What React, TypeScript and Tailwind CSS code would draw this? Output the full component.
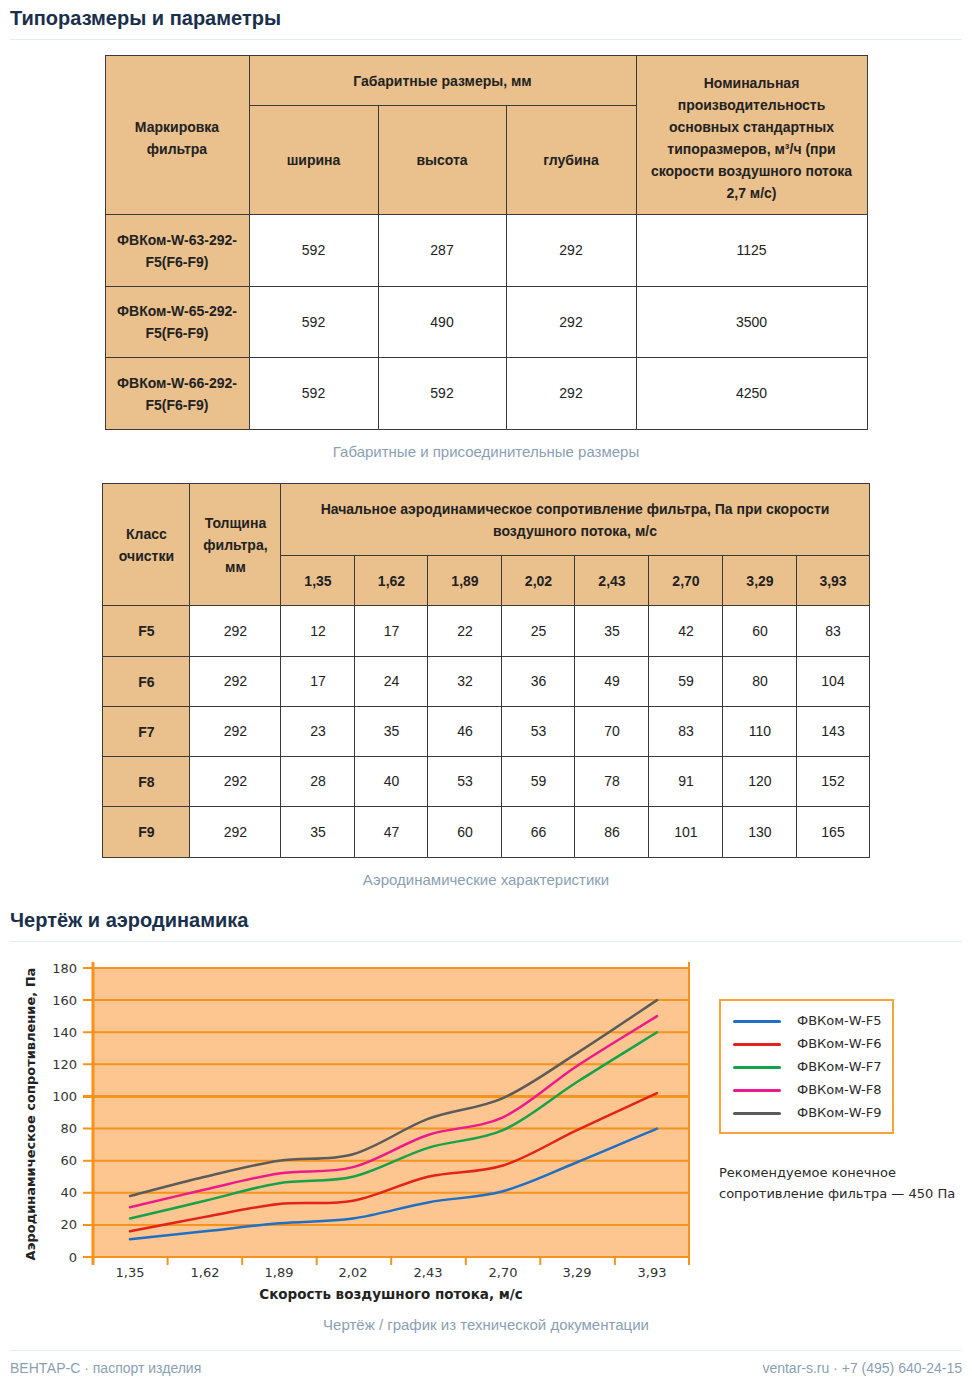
import React from "react"

const sizes = [
  { name: ["ФВКом-W-63-292-", "F5(F6-F9)"], w: 592, h: 287, d: 292, q: 1125, rh: "h-[72px]" },
  { name: ["ФВКом-W-65-292-", "F5(F6-F9)"], w: 592, h: 490, d: 292, q: 3500, rh: "h-[71px]" },
  { name: ["ФВКом-W-66-292-", "F5(F6-F9)"], w: 592, h: 592, d: 292, q: 4250, rh: "h-[72px]" },
]

const speeds = ["1,35", "1,62", "1,89", "2,02", "2,43", "2,70", "3,29", "3,93"]
const speedW = ["w-[74px]", "w-[73px]", "w-[74px]", "w-[73px]", "w-[74px]", "w-[74px]", "w-[74px]", "w-[72px]"]

const aero = [
  { cls: "F5", vals: [12, 17, 22, 25, 35, 42, 60, 83], rh: "h-[51px]" },
  { cls: "F6", vals: [17, 24, 32, 36, 49, 59, 80, 104], rh: "h-[50px]" },
  { cls: "F7", vals: [23, 35, 46, 53, 70, 83, 110, 143], rh: "h-[50px]" },
  { cls: "F8", vals: [28, 40, 53, 59, 78, 91, 120, 152], rh: "h-[50px]" },
  { cls: "F9", vals: [35, 47, 60, 66, 86, 101, 130, 165], rh: "h-[51px]" },
]

// chart geometry, in page pixels
const X0 = 93
const X1 = 689
const Y0 = 1257
const PX = 289 / 180
const yOf = (v: number) => Y0 - v * PX
const xs = [130, 205, 279, 353, 428, 503, 577, 657]
const ticks = [167.6, 242.2, 316.7, 391.2, 465.8, 540.3, 614.9, 689]

const series = [
  { label: "ФВКом-W-F5", color: "#1f6fc4", v: [11, 16, 21, 24, 34, 41, 59, 80] },
  { label: "ФВКом-W-F6", color: "#e2231a", v: [16, 25, 33, 35, 50, 57, 79, 102] },
  { label: "ФВКом-W-F7", color: "#16a24a", v: [24, 35, 46, 50, 68, 79, 109, 140] },
  { label: "ФВКом-W-F8", color: "#ec1b8c", v: [31, 42, 52, 56, 76, 87, 119, 150] },
  { label: "ФВКом-W-F9", color: "#5b5b5b", v: [38, 50, 60, 64, 86, 99, 127, 160] },
]

function smooth(vals: number[]) {
  const p = vals.map((v, i) => [xs[i], yOf(v)])
  let d = `M${p[0][0]},${p[0][1]}`
  for (let i = 0; i < p.length - 1; i++) {
    const a = p[i - 1] || p[i]
    const b = p[i]
    const c = p[i + 1]
    const e = p[i + 2] || c
    const c1 = [b[0] + (c[0] - a[0]) / 6, b[1] + (c[1] - a[1]) / 6]
    const c2 = [c[0] - (e[0] - b[0]) / 6, c[1] - (e[1] - b[1]) / 6]
    d += ` C${c1[0]},${c1[1]} ${c2[0]},${c2[1]} ${c[0]},${c[1]}`
  }
  return d
}

function Chart() {
  const grid = [0, 20, 40, 60, 80, 100, 120, 140, 160, 180]
  return (
    <svg width={690} height={350} viewBox="10 955 690 350" className="shrink-0" style={{ fontFamily: "'DejaVu Sans', sans-serif" }}>
      <rect x={X0} y={yOf(180)} width={X1 - X0} height={Y0 - yOf(180)} fill="#fdc58f" />
      {grid.map((g) => (
        <line key={g} x1={83} x2={X1} y1={yOf(g)} y2={yOf(g)} stroke="#f6921e" strokeWidth={g === 100 ? 3 : 2} />
      ))}
      {grid.map((g) => (
        <text key={"t" + g} x={77} y={yOf(g) + 4.5} textAnchor="end" fontSize={13} fill="#333">
          {g}
        </text>
      ))}
      <line x1={X0} x2={X0} y1={962} y2={1265} stroke="#f6921e" strokeWidth={3} />
      <line x1={X1} x2={X1} y1={962} y2={1265} stroke="#f6921e" strokeWidth={2} />
      {ticks.map((t) => (
        <line key={t} x1={t} x2={t} y1={Y0} y2={1265} stroke="#f6921e" strokeWidth={2} />
      ))}
      {speeds.map((s, i) => (
        <text key={s} x={xs[i] + (i === 7 ? -5 : 0)} y={1277} textAnchor="middle" fontSize={13} fill="#333">
          {s}
        </text>
      ))}
      {series.map((s) => (
        <path key={s.label} d={smooth(s.v)} fill="none" stroke={s.color} strokeWidth={2.5} strokeLinecap="round" />
      ))}
      <text x={391} y={1299} textAnchor="middle" fontSize={13.5} fontWeight="bold" fill="#222">
        Скорость воздушного потока, м/с
      </text>
      <text
        x={0}
        y={0}
        transform="translate(35 1114) rotate(-90)"
        textAnchor="middle"
        fontSize={13}
        fontWeight="bold"
        fill="#222"
      >
        Аэродинамическое сопротивление, Па
      </text>
    </svg>
  )
}

export default function App() {
  const th = "border border-[#3a3a3a] bg-[#eac18d] font-bold text-[14px] leading-[22px] text-[#222] text-center"
  const td = "border border-[#3a3a3a] bg-white text-[14px] text-[#222] text-center"
  return (
    <div className="w-[972px] px-[10px] bg-white font-['Liberation_Sans',Arial,sans-serif]">
      <h2 className="pt-[6px] pb-[9px] text-[20px] leading-[24px] font-bold text-[#1a2f4c] border-b border-[#e3edf6]">
        Типоразмеры и параметры
      </h2>

      <table className="mx-auto mt-[15px] border-collapse table-fixed w-[762px]">
        <colgroup>
          <col className="w-[144px]" />
          <col className="w-[129px]" />
          <col className="w-[128px]" />
          <col className="w-[130px]" />
          <col className="w-[231px]" />
        </colgroup>
        <thead>
          <tr className="h-[50px]">
            <th rowSpan={2} className={th + " pt-[6px]"}>
              Маркировка
              <br />
              фильтра
            </th>
            <th colSpan={3} className={th}>
              Габаритные размеры, мм
            </th>
            <th rowSpan={2} className={th + " px-[6px] pt-[5px]"}>
              Номинальная
              <br />
              производительность
              <br />
              основных стандартных
              <br />
              типоразмеров, м³/ч (при
              <br />
              скорости воздушного потока
              <br />
              2,7 м/с)
            </th>
          </tr>
          <tr className="h-[109px]">
            <th className={th}>ширина</th>
            <th className={th}>высота</th>
            <th className={th}>глубина</th>
          </tr>
        </thead>
        <tbody>
          {sizes.map((r) => (
            <tr key={r.name[0] + r.h} className={r.rh}>
              <td className={th}>
                {r.name[0]}
                <br />
                {r.name[1]}
              </td>
              <td className={td}>{r.w}</td>
              <td className={td}>{r.h}</td>
              <td className={td}>{r.d}</td>
              <td className={td}>{r.q}</td>
            </tr>
          ))}
        </tbody>
      </table>

      <p className="mt-[12px] text-center text-[15px] leading-[20px] text-[#8a9fb3]">
        Габаритные и присоединительные размеры
      </p>

      <table className="mx-auto mt-[21px] border-collapse table-fixed w-[766px]">
        <colgroup>
          <col className="w-[87px]" />
          <col className="w-[91px]" />
          {speedW.map((w, i) => (
            <col key={i} className={w} />
          ))}
        </colgroup>
        <thead>
          <tr className="h-[72px]">
            <th rowSpan={2} className={th}>
              Класс
              <br />
              очистки
            </th>
            <th rowSpan={2} className={th}>
              Толщина
              <br />
              фильтра,
              <br />
              мм
            </th>
            <th colSpan={8} className={th}>
              Начальное аэродинамическое сопротивление фильтра, Па при скорости
              <br />
              воздушного потока, м/с
            </th>
          </tr>
          <tr className="h-[50px]">
            {speeds.map((s) => (
              <th key={s} className={th}>
                {s}
              </th>
            ))}
          </tr>
        </thead>
        <tbody>
          {aero.map((r) => (
            <tr key={r.cls} className={r.rh}>
              <td className={th}>{r.cls}</td>
              <td className={td}>292</td>
              {r.vals.map((v, i) => (
                <td key={i} className={td}>
                  {v}
                </td>
              ))}
            </tr>
          ))}
        </tbody>
      </table>

      <p className="mt-[12px] text-center text-[15px] leading-[20px] text-[#8a9fb3]">
        Аэродинамические характеристики
      </p>

      <h2 className="pt-[18px] pb-[9px] text-[20px] leading-[24px] font-bold text-[#1a2f4c] border-b border-[#e3edf6]">
        Чертёж и аэродинамика
      </h2>

      <div className="mt-[13px] flex">
        <Chart />
        <div className="ml-[19px] mt-[44px] font-['DejaVu_Sans',sans-serif] text-[#2a2a2a]">
          <div className="w-[175px] border-2 border-[#f9a33b] bg-white pl-[12px] pt-[10px] pb-[9px] flex flex-col gap-[3px]">
            {series.map((s) => (
              <div key={s.label} className="flex items-center h-[20px]">
                <span className="w-[48px] h-[3px] rounded-full" style={{ background: s.color }} />
                <span className="ml-[16px] text-[13px]">{s.label}</span>
              </div>
            ))}
          </div>
          <p className="mt-[28px] text-[13px] leading-[21px] whitespace-nowrap">
            Рекомендуемое конечное
            <br />
            сопротивление фильтра — 450 Па
          </p>
        </div>
      </div>

      <p className="mt-[10px] text-center text-[15px] leading-[20px] text-[#8a9fb3]">
        Чертёж / график из технической документации
      </p>

      <div className="mt-[15px] border-t border-[#e3edf6] pt-[7px] pb-[8px] flex justify-between text-[14px] leading-[20px] text-[#8a9fb3]">
        <span>ВЕНТАР-С · паспорт изделия</span>
        <span>ventar-s.ru · +7 (495) 640-24-15</span>
      </div>
    </div>
  )
}
